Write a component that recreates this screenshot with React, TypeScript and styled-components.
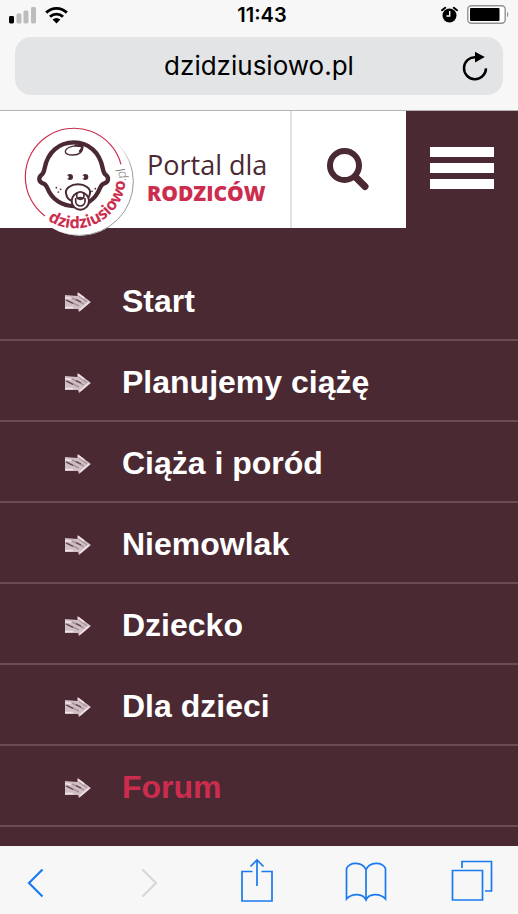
import React from 'react';
import styled, { createGlobalStyle } from 'styled-components';

const plum = '#4a2933';
const red = '#cc2d4e';
const blue = '#1a7af0';

const GlobalStyle = createGlobalStyle`
  *, *::before, *::after { box-sizing: border-box; }
  body { margin: 0; background: #f7f7f7; }
  button { padding: 0; border: 0; background: none; font: inherit; color: inherit; cursor: pointer; }
  svg { display: block; }
`;

const Page = styled.div`
  display: flex;
  flex-direction: column;
  height: 100vh;
  overflow: hidden;
  background: ${plum};
  font-family: 'Liberation Sans', Arial, sans-serif;
`;

const BrowserTop = styled.div`
  flex: none;
  background: #f7f7f7;
  border-bottom: 1px solid #b4b2b3;
  padding-bottom: 15px;
  font-family: Inter, sans-serif;
  color: #000;
`;

const StatusBar = styled.div`
  display: grid;
  grid-template-columns: 1fr auto 1fr;
  align-items: center;
  height: 29px;
  padding: 0 8px;
`;

const StatusGroup = styled.div<{ $end?: boolean }>`
  display: flex;
  align-items: center;
  justify-content: ${p => (p.$end ? 'flex-end' : 'flex-start')};
  gap: 9px;
`;

const Clock = styled.time`
  margin-left: 6px;
  font-size: 20px;
  line-height: 28px;
  font-weight: 600;
`;

const AddressBar = styled.div`
  display: grid;
  grid-template-columns: 44px 1fr 44px;
  align-items: center;
  height: 58px;
  margin: 8px 15px 0;
  padding: 0 6px;
  border-radius: 16px;
  background: #e3e4e6;
`;

const Address = styled.span`
  grid-column: 2;
  text-align: center;
  font-size: 26px;
  line-height: 36px;
`;

const IconButton = styled.button`
  display: grid;
  place-items: center;
  height: 44px;
`;

const Header = styled.header`
  position: relative;
  flex: none;
  display: flex;
  height: 117px;
  background: #fff;
`;

const Brand = styled.a`
  flex: 1;
  display: flex;
  align-items: flex-start;
  gap: 10px;
  padding: 15px 0 0 24px;
  text-decoration: none;
  font-family: 'Open Sans', sans-serif;

  svg { flex: none; }
`;

const BrandText = styled.span`
  display: flex;
  flex-direction: column;
  padding-top: 23px;
  white-space: nowrap;
`;

const BrandLine = styled.span`
  font-size: 27px;
  line-height: 32px;
  color: ${plum};
`;

const BrandStrong = styled.strong`
  font-size: 21px;
  line-height: 24px;
  font-weight: 800;
  color: ${red};
`;

const SearchButton = styled.button`
  display: grid;
  place-items: center;
  width: 116px;
  padding: 0 2px 2px 0;
  border-left: 2px solid #e4e1e2;
`;

const MenuButton = styled.button`
  display: flex;
  flex-direction: column;
  align-items: center;
  justify-content: center;
  gap: 6px;
  width: 112px;
  padding-bottom: 3px;
  background: ${plum};
`;

const MenuBar = styled.span`
  width: 64px;
  height: 10px;
  background: #fff;
`;

const Nav = styled.nav`
  flex: 1;
  min-height: 0;
  overflow: hidden;
  padding-top: 32px;
`;

const NavList = styled.ul`
  margin: 0;
  padding: 0;
  list-style: none;
`;

const NavItem = styled.li`
  border-bottom: 2px solid #6b4b56;
`;

const NavLink = styled.a<{ $accent?: boolean }>`
  display: flex;
  align-items: center;
  gap: 30px;
  height: 79px;
  padding: 2px 0 0 64px;
  font-size: 32px;
  line-height: 40px;
  font-weight: 700;
  text-decoration: none;
  color: ${p => (p.$accent ? red : '#fff')};
`;

const Toolbar = styled.footer`
  flex: none;
  display: flex;
  align-items: center;
  justify-content: space-between;
  height: 68px;
  padding: 2px 25px 0 7px;
  background: #f7f7f7;
`;

const ToolButton = styled.button<{ $width: number }>`
  display: grid;
  place-items: center;
  width: ${p => p.$width}px;
  height: 52px;
`;

const SignalIcon = () => (
  <svg width="28" height="18" viewBox="0 0 28 18" aria-hidden="true">
    <rect x="1" y="10" width="5" height="7.5" rx="1.4" fill="#000" />
    <g fill="#bcbcbd">
      <rect x="8.5" y="7.5" width="5" height="10" rx="1.4" />
      <rect x="15.500" y="4.5" width="5" height="13" rx="1.4" />
      <rect x="23" y="1" width="5" height="16.5" rx="1.4" />
    </g>
  </svg>
);

const WifiIcon = () => (
  <svg width="23" height="18" viewBox="0 0 23 18" fill="none" aria-hidden="true">
    <path d="M1.2 6.6a14.6 14.6 0 0 1 20.6 0M5 10.8a9.3 9.3 0 0 1 13 0" stroke="#000" strokeWidth="2.9" />
    <path d="M7.6 13.6a5.7 5.7 0 0 1 7.800 0l-3.900 4z" fill="#000" />
  </svg>
);

const AlarmIcon = () => (
  <svg width="17" height="18" viewBox="0 0 17 18" aria-hidden="true">
    <circle cx="8.5" cy="9.5" r="7" fill="#000" />
    <path d="M1 4.2 4.2 1.8M16 4.2l-3.2-2.4" stroke="#000" strokeWidth="2" strokeLinecap="round" />
    <path d="M8.7 5v5H5.4" fill="none" stroke="#f7f7f7" strokeWidth="1.4" />
  </svg>
);

const BatteryIcon = () => (
  <svg width="43" height="19" viewBox="0 0 43 19" aria-hidden="true">
    <rect x="0.8" y="0.8" width="37.4" height="17.4" rx="3.5" fill="#fff" stroke="#929292" strokeWidth="1.4" />
    <rect x="3" y="3" width="29.5" height="13" rx="1" fill="#000" />
    <path d="M40 6.500q2.600 3 0 6z" fill="#929292" />
  </svg>
);

const ReloadIcon = () => (
  <svg width="26" height="30" viewBox="0 0 26 30" aria-hidden="true">
    <path d="M13.800 6.200A11 11 0 1 0 24 17.400" fill="none" stroke="#000" strokeWidth="2.5" />
    <path d="M13 .8 22.800 6 13 11.600z" fill="#000" />
  </svg>
);

const BabyLogo = () => (
  <svg width="113" height="113" viewBox="42 48 339 339" role="img" aria-label="dzidziusiowo.pl">
    <defs>
      <linearGradient id="rim" x1="0.45" y1="0.2" x2="0.9" y2="0.5">
        <stop offset="0.3" stopColor="#fff" stopOpacity="0" />
        <stop offset="1" stopColor="#98989a" />
      </linearGradient>
      <path id="logoArc" d="M113.300 331.200A152 152 0 0 0 332.800 138.800" />
    </defs>
    <circle cx="209" cy="215" r="162" fill="#fff" />
    <circle cx="209" cy="215" r="161" fill="none" stroke="url(#rim)" strokeWidth="3" />
    <path d="M105 318A146 146 0 1 1 333 163" fill="none" stroke={red} strokeWidth="3.500" />
    <path
      d="M192 97c-46 0-79 30-88 77q-3 16-9 20c-10 8-10 22 4 26q8 2 13 14c14 36 46 54 80 54s64-18 78-54q5-12 13-14c14-4 14-18 4-26q-6-4-9-20c-9-47-42-77-86-77z"
      fill="#fff" stroke={plum} strokeWidth="13" strokeLinejoin="round"
    />
    <g fill="none" stroke={plum} strokeWidth="4">
      <path d="M166 124c3-15 34-19 52-16 2 17-10 27-30 27-13 0-23-4-22-11z" />
      <path d="M194 106q14 2 23 2-1 12-9 18" strokeWidth="7" />
    </g>
    <g fill={plum}>
      <circle cx="180" cy="201" r="9" />
      <circle cx="226" cy="201" r="9" />
      <circle cx="139" cy="233" r="2.600" />
      <circle cx="152" cy="238" r="2.600" />
      <circle cx="145" cy="246" r="2.600" />
      <circle cx="256" cy="236" r="2.600" />
      <circle cx="246" cy="244" r="2.600" />
    </g>
    <g fill="#fff">
      <circle cx="172" cy="201" r="4.500" />
      <circle cx="218" cy="201" r="4.500" />
    </g>
    <g fill="#fff" stroke={plum} strokeWidth="6">
      <path d="M168 250c-3-15 15-27 36-27s39 12 36 27c-2 14-12 22-22 22h-32c-10-2-16-10-18-22z" />
      <circle cx="211" cy="273" r="26" />
      <path d="M197 264v10a14 14 0 0 0 28 0v-10" strokeWidth="5" />
      <circle cx="211" cy="257" r="11" strokeWidth="5" />
      <path d="M201 266q10-5 20 0" fill="none" strokeWidth="6" />
    </g>
    <text fontFamily="'Open Sans', sans-serif" fontSize="49" fontWeight="700" fill={red}>
      <textPath href="#logoArc">
        dzidziusiowo<tspan fontSize="38" fontWeight="300" fill="#6a6469">.pl</tspan>
      </textPath>
    </text>
  </svg>
);

const SearchIcon = () => (
  <svg width="44" height="44" viewBox="0 0 44 44" fill="none" stroke={plum} aria-hidden="true">
    <circle cx="18.5" cy="18.5" r="14.500" strokeWidth="6" />
    <path d="m29.500 30 9.500 9.500" strokeWidth="7" strokeLinecap="round" />
  </svg>
);

const ArrowIcon = () => (
  <svg width="28" height="22" viewBox="0 0 28 22" aria-hidden="true">
    <path d="M1 5l12.500 1V2L27 12 15 22l-1-3H1z" fill="#cfbfc4" />
    <path d="M3 10l12 6M8 8l12 6M15 6l8 6" stroke="#a8929a" strokeWidth="1.400" />
    <path d="M1 7.500l6 1M14 3.500l6 4.500M16 20l9-8M1 17.500h8" stroke="#f1e3e7" strokeWidth="1.600" />
    <path d="M2 10l7 3.500M12 9.500l5 2.500" stroke="#5f414b" strokeWidth="1.300" />
  </svg>
);

const ChevronIcon = ({ forward }: { forward?: boolean }) => (
  <svg width="20" height="34" viewBox="0 0 20 34" fill="none" stroke={forward ? '#d5d6d8' : blue} strokeWidth="2.200" aria-hidden="true">
    <path d={forward ? 'M3.500 5.500 17 19 3.500 32.500' : 'M17.500 5.500 4 19 17.500 32.500'} />
  </svg>
);

const ShareIcon = () => (
  <svg width="32" height="46" viewBox="0 0 32 46" fill="none" stroke={blue} strokeWidth="1.700" aria-hidden="true">
    <path d="M11.500 13.500H1v29.500h30V13.500H20.500M16 28V2M9.500 8.500 16 2l6.500 6.500" />
  </svg>
);

const BookIcon = () => (
  <svg width="42" height="42" viewBox="0 0 42 42" fill="none" stroke={blue} strokeWidth="1.700" aria-hidden="true">
    <path d="M21 10v30.500M21 9.500C17 1.500 5 1.500 1.500 8.500V39C7 33 18 33 21 40c3-7 14-7 19.500-1V8.500C37 1.500 25 1.500 21 9.500z" />
  </svg>
);

const TabsIcon = () => (
  <svg width="42" height="42" viewBox="0 0 42 42" fill="none" stroke={blue} strokeWidth="1.700" aria-hidden="true">
    <path d="M1.500 10.500h30v29.500h-30zM11 8V1.500h29.500v29.500H34" />
  </svg>
);

const entries = [
  { label: 'Start' },
  { label: 'Planujemy ciążę' },
  { label: 'Ciąża i poród' },
  { label: 'Niemowlak' },
  { label: 'Dziecko' },
  { label: 'Dla dzieci' },
  { label: 'Forum', accent: true },
];

export default function App() {
  return (
    <Page>
      <GlobalStyle />
      <BrowserTop>
        <StatusBar>
          <StatusGroup>
            <SignalIcon />
            <WifiIcon />
          </StatusGroup>
          <Clock>11:43</Clock>
          <StatusGroup $end>
            <AlarmIcon />
            <BatteryIcon />
          </StatusGroup>
        </StatusBar>
        <AddressBar>
          <Address>dzidziusiowo.pl</Address>
          <IconButton aria-label="Odśwież"><ReloadIcon /></IconButton>
        </AddressBar>
      </BrowserTop>
      <Header>
        <Brand href="#start">
          <BabyLogo />
          <BrandText>
            <BrandLine>Portal dla</BrandLine>
            <BrandStrong>RODZICÓW</BrandStrong>
          </BrandText>
        </Brand>
        <SearchButton aria-label="Szukaj"><SearchIcon /></SearchButton>
        <MenuButton aria-label="Menu">
          <MenuBar />
          <MenuBar />
          <MenuBar />
        </MenuButton>
      </Header>
      <Nav aria-label="Menu główne">
        <NavList>
          {entries.map(entry => (
            <NavItem key={entry.label}>
              <NavLink href="#menu" $accent={entry.accent}>
                <ArrowIcon />
                {entry.label}
              </NavLink>
            </NavItem>
          ))}
        </NavList>
      </Nav>
      <Toolbar>
        <ToolButton $width={56} aria-label="Wstecz"><ChevronIcon /></ToolButton>
        <ToolButton $width={46} aria-label="Dalej"><ChevronIcon forward /></ToolButton>
        <ToolButton $width={46} aria-label="Udostępnij"><ShareIcon /></ToolButton>
        <ToolButton $width={46} aria-label="Zakładki"><BookIcon /></ToolButton>
        <ToolButton $width={42} aria-label="Karty"><TabsIcon /></ToolButton>
      </Toolbar>
    </Page>
  );
}
